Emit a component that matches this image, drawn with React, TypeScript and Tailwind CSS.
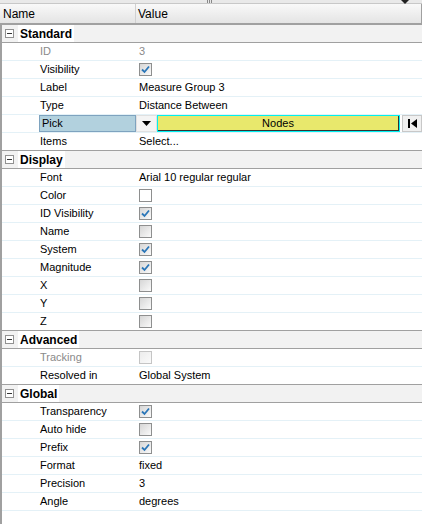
import React from "react"

type Row =
  | { kind: "section"; label: string }
  | { kind: "text"; label: string; value: string; disabled?: boolean }
  | { kind: "check"; label: string; checked: boolean; white?: boolean; disabled?: boolean }
  | { kind: "pick"; label: string }

const rows: Row[] = [
  { kind: "section", label: "Standard" },
  { kind: "text", label: "ID", value: "3", disabled: true },
  { kind: "check", label: "Visibility", checked: true },
  { kind: "text", label: "Label", value: "Measure Group 3" },
  { kind: "text", label: "Type", value: "Distance Between" },
  { kind: "pick", label: "Pick" },
  { kind: "text", label: "Items", value: "Select..." },
  { kind: "section", label: "Display" },
  { kind: "text", label: "Font", value: "Arial 10 regular regular" },
  { kind: "check", label: "Color", checked: false, white: true },
  { kind: "check", label: "ID Visibility", checked: true },
  { kind: "check", label: "Name", checked: false },
  { kind: "check", label: "System", checked: true },
  { kind: "check", label: "Magnitude", checked: true },
  { kind: "check", label: "X", checked: false },
  { kind: "check", label: "Y", checked: false },
  { kind: "check", label: "Z", checked: false },
  { kind: "section", label: "Advanced" },
  { kind: "check", label: "Tracking", checked: false, disabled: true },
  { kind: "text", label: "Resolved in", value: "Global System" },
  { kind: "section", label: "Global" },
  { kind: "check", label: "Transparency", checked: true },
  { kind: "check", label: "Auto hide", checked: false },
  { kind: "check", label: "Prefix", checked: true },
  { kind: "text", label: "Format", value: "fixed" },
  { kind: "text", label: "Precision", value: "3" },
  { kind: "text", label: "Angle", value: "degrees" },
]

function CheckBox({ checked, white, disabled }: { checked: boolean; white?: boolean; disabled?: boolean }) {
  const box = disabled
    ? "border-[#c5c5c5] bg-gradient-to-br from-[#ececec] to-[#fafafa]"
    : white
      ? "border-[#8e8f8f] bg-white"
      : "border-[#8e8f8f] bg-gradient-to-br from-[#d6d6d6] to-[#fafafa]"
  return (
    <div className={`w-[13px] h-[13px] border ${box} flex items-center justify-center`}>
      {checked && (
        <svg width="9" height="9" viewBox="0 0 9 9">
          <path d="M1 4.5 L3.5 7 L8 1.5" fill="none" stroke="#2a76b8" strokeWidth="1.8" />
        </svg>
      )}
    </div>
  )
}

function MinusBox() {
  return (
    <div className="w-[9px] h-[9px] border border-[#919191] bg-white flex items-center justify-center">
      <div className="w-[5px] h-[1px] bg-[#333]" />
    </div>
  )
}

export default function App() {
  return (
    <div
      className="w-[422px] h-[524px] bg-white relative overflow-hidden text-black"
      style={{ fontFamily: '"Liberation Sans", Arial, sans-serif' }}
    >
      {/* top strip */}
      <div className="h-[4px] bg-[#e9e9e9] border-b border-[#c8c8c8] relative">
        <div className="absolute left-[207px] top-0 flex gap-[1px]">
          <div className="w-[1px] h-[3px] bg-[#888]" />
          <div className="w-[1px] h-[3px] bg-[#888]" />
          <div className="w-[1px] h-[3px] bg-[#888]" />
        </div>
        <svg className="absolute left-[401px] top-0" width="8" height="4" viewBox="0 0 8 4">
          <path d="M0 0 L8 0 L4 4 Z" fill="#222" />
        </svg>
      </div>

      {/* header */}
      <div className="h-[21px] flex bg-gradient-to-b from-[#f9f9f9] to-[#e4e4e4] border-b-2 border-[#a0a0a0] border-r border-r-[#a0a0a0] text-[12px]">
        <div className="w-[136px] pl-[3px] flex items-center border-r border-[#d0d0d0]">Name</div>
        <div className="flex-1 pl-[2px] flex items-center">Value</div>
      </div>

      {/* body */}
      <div className="border-l-2 border-[#a0a0a0] h-full">
        {rows.map((r, i) => {
          const beforeSection = rows[i + 1]?.kind === "section"
          const sep = beforeSection ? "border-[#a0a0a0]" : "border-[#e4f1f7]"
          if (r.kind === "section") {
            return (
              <div key={i} className="h-[18px] flex items-center bg-[#f2f2f2] border-b border-[#a0a0a0]">
                <div className="w-[16px] pl-[3px] flex items-center">
                  <MinusBox />
                </div>
                <div className="bg-white h-full flex items-center pl-[2px] pr-[2px] text-[12px] font-bold">{r.label}</div>
              </div>
            )
          }
          if (r.kind === "pick") {
            return (
              <div key={i} className={`h-[18px] flex border-b ${sep} text-[11px]`}>
                <div className="w-[37px]" />
                <div className="w-[97px] bg-[#b2d1de] border border-[#7ea3bf] flex items-center pl-[2px]">{r.label}</div>
                <div className="w-[21px] bg-[#f4f4f4] border border-[#e0e0e0] flex items-center justify-center">
                  <svg width="9" height="5" viewBox="0 0 9 5">
                    <path d="M0 0 L9 0 L4.5 5 Z" fill="#000" />
                  </svg>
                </div>
                <div className="w-[243px] border border-[#00f0f0]">
                  <div className="h-full bg-[#e8e86c] border-r border-b border-[#333] flex items-center justify-center">Nodes</div>
                </div>
                <div className="w-[2px]" />
                <div className="flex-1 bg-[#f0f0f0] border border-[#c8c8c8] flex items-center justify-center">
                  <svg width="9" height="9" viewBox="0 0 9 9">
                    <rect x="0" y="0" width="2" height="9" fill="#000" />
                    <path d="M9 0 L9 9 L3 4.5 Z" fill="#000" />
                  </svg>
                </div>
              </div>
            )
          }
          const labelColor = r.disabled ? "text-[#8a8a8a]" : "text-black"
          return (
            <div key={i} className={`h-[18px] flex items-center border-b ${sep} text-[11px]`}>
              <div className={`w-[134px] pl-[38px] ${labelColor}`}>{r.label}</div>
              <div className="flex-1 pl-[3px] flex items-center">
                {r.kind === "text" ? (
                  <span className={r.disabled ? "text-[#8a8a8a]" : ""}>{r.value}</span>
                ) : (
                  <CheckBox checked={r.checked} white={r.white} disabled={r.disabled} />
                )}
              </div>
            </div>
          )
        })}
      </div>
    </div>
  )
}
